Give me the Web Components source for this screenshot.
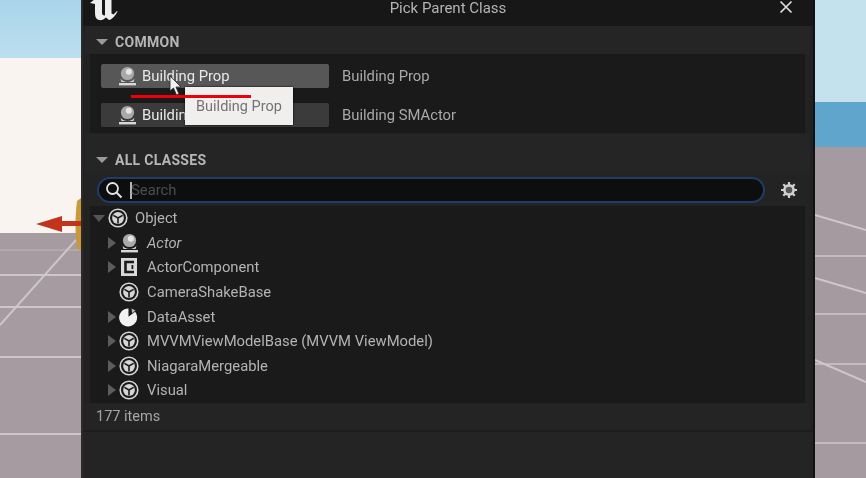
<!DOCTYPE html>
<html>
<head>
<meta charset="utf-8">
<title>Pick Parent Class</title>
<style>
	html, body { margin: 0; height: 100%; background: #a59aa0; overflow: hidden; }
	body { font-family: Roboto, "Liberation Sans", sans-serif; }
</style>
</head>
<body>
<ue-viewport>
	<ue-dialog heading="Pick Parent Class">
		<ue-section label="COMMON" height="28" pad="4">
			<ue-common-list>
				<ue-class-button label="Building Prop" desc="Building Prop"></ue-class-button>
				<ue-class-button label="Building SMActor" desc="Building SMActor"></ue-class-button>
				<ue-tooltip>Building Prop</ue-tooltip>
			</ue-common-list>
		</ue-section>
		<ue-section label="ALL CLASSES" height="38" pad="13">
			<ue-search></ue-search>
			<ue-tree>
				<ue-tree-row icon="object" open level="0">Object</ue-tree-row>
				<ue-tree-row icon="actor" arrow italic>Actor</ue-tree-row>
				<ue-tree-row icon="comp" arrow>ActorComponent</ue-tree-row>
				<ue-tree-row icon="object">CameraShakeBase</ue-tree-row>
				<ue-tree-row icon="pie" arrow>DataAsset</ue-tree-row>
				<ue-tree-row icon="object" arrow>MVVMViewModelBase (MVVM ViewModel)</ue-tree-row>
				<ue-tree-row icon="object" arrow>NiagaraMergeable</ue-tree-row>
				<ue-tree-row icon="object" arrow>Visual</ue-tree-row>
			</ue-tree>
			<ue-status>177 items</ue-status>
		</ue-section>
	</ue-dialog>
</ue-viewport>

<script>
const ICONS = {
	object: `<svg viewBox="0 0 20 20" width="20" height="20">
		<circle cx="10" cy="10" r="8.8" fill="none" stroke="#d6d6d6" stroke-width="1.6"/>
		<circle cx="10" cy="10" r="5.9" fill="#d6d6d6"/>
		<path d="M10 10 5.400 7.400M10 10l4.600-2.600M10 10v5.600" stroke="#1a1a1a" stroke-width="1.600" fill="none"/>
	</svg>`,
	actor: `<svg viewBox="0 0 20 20" width="20" height="20">
		<circle cx="10.500" cy="7.500" r="6.600" fill="#a9a9a9"/>
		<circle cx="11.800" cy="5.800" r="3" fill="#e6e6e6"/>
		<path d="M3.500 12.500c1.400 2.400 3.800 3.400 7 3.400s5.600-1 7-3.400l-1 3.600H4.500z" fill="#d8d8d8"/>
		<rect x="2" y="17" width="17" height="2.400" fill="#d8d8d8"/>
	</svg>`,
	comp: `<svg viewBox="0 0 20 20" width="20" height="20">
		<rect x="2" y="1" width="16" height="18" fill="#d9d9d9"/>
		<path d="M15 5H6.500v10H15" fill="none" stroke="#1a1a1a" stroke-width="2.600"/>
		<rect x="12.500" y="8" width="1.800" height="4" fill="#1a1a1a"/>
	</svg>`,
	pie: `<svg viewBox="0 0 20 20" width="20" height="20">
		<path d="M9.500 1.500v8.300l6.600-5A9 9 0 1 1 9.500 1.500z" fill="#f2f2f2"/>
		<path d="M12.500 1.500l4 2-3.400 2.700z" fill="#b8b8b8"/>
	</svg>`
}

class UeViewport extends HTMLElement {
	constructor() {
		super()
		this.attachShadow({ mode: 'open' })
		this.shadowRoot.innerHTML = `
			<style>
				:host { display: block; position: relative; width: 866px; height: 478px; overflow: hidden; filter: blur(.45px); }
				svg { position: absolute; left: 0; top: 0; }
				.content { position: relative; display: flex; justify-content: flex-start; padding-left: 81px; height: 100%; }
			</style>
			<svg width="866" height="478" viewBox="0 0 866 478">
				<defs>
					<linearGradient id="sky" x1="0" y1="0" x2="0" y2="1">
						<stop offset="0" stop-color="#a9d5ea"/>
						<stop offset="1" stop-color="#bcdfee"/>
					</linearGradient>
				</defs>
				<rect width="81" height="58" fill="url(#sky)"/>
				<rect y="58" width="81" height="175" fill="#faf4f1"/>
				<rect y="233" width="81" height="245" fill="#a69ba0"/>
				<rect x="815" width="51" height="102" fill="#c4e1ee"/>
				<rect x="815" y="102" width="51" height="45" fill="#5fa5cc"/>
				<rect x="815" y="147" width="51" height="331" fill="#a59aa0"/>
				<g stroke="#cfc6c9" stroke-width="2" fill="none">
					<path d="M0 275h81M0 307h81M0 357h81M0 434h81"/>
					<path d="M0 250h81" stroke="#b3a9ad"/>
					<path d="M0 325 76 240"/>
					<path d="M815 256h51M815 314h51M815 364h51M815 443h51" stroke-width="1.500"/>
					<path d="M815 278 866 293M815 360 866 382M815 215l51 15"/>
				</g>
				<path d="M77 248c-2-14-2-32 0-47l4-3v53z" fill="#c99a3c"/>
				<path d="M36 224 62 216v5h19v5H62v6z" fill="#c2331c"/>
			</svg>
			<div class="content"><slot></slot></div>
		`
	}
}

class UeDialog extends HTMLElement {
	constructor() {
		super()
		this.attachShadow({ mode: 'open' })
		this.shadowRoot.innerHTML = `
			<style>
				:host { display: flex; flex-direction: column; width: 734px; height: 478px; box-sizing: border-box; background: #222; border-left: 2px solid #2c2a2a; border-right: 2px solid #121212; color: #c4c4c4; }
				.title { flex: 0 0 26px; display: grid; grid-template-columns: 1fr auto 1fr; align-items: start; background: #171717; padding: 0 20px; }
				.title svg.logo { display: block; margin: -6px 0 0 -13px; }
				.name { font-size: 15px; line-height: 16px; color: #b4b4b4; }
				.close { justify-self: end; }
				.body { flex: 1; display: flex; flex-direction: column; padding: 0 3px 0 2px; min-height: 0; }
				.end { flex: 1; background: #242424; border-top: 2px solid #1c1c1c; margin: 0 -3px 0 -2px; }
			</style>
			<div class="title">
				<svg class="logo" width="28" height="27" viewBox="0 0 28 27">
					<path d="M0 9 5 5V1h7v18c0 1.500 1 2.500 2.500 2.500l.5-.3V1h6.500v18.500l2 1 3.500-3.500.5.500C26 21 22 25.500 19 26l-3-2.500C14 25.500 11.500 26.500 9 26 5.500 25 5 22 5 18V10z" fill="#eeeeee"/>
				</svg>
				<div class="name">${this.getAttribute('heading')}</div>
				<svg class="close" width="14" height="14" viewBox="0 0 14 14">
					<path d="M1.500 1.500l11 11M12.500 1.500l-11 11" stroke="#dedede" stroke-width="1.700" fill="none"/>
				</svg>
			</div>
			<div class="body">
				<slot></slot>
				<div class="end"></div>
			</div>
		`
	}
}

class UeSection extends HTMLElement {
	constructor() {
		super()
		this.attachShadow({ mode: 'open' })
		this.shadowRoot.innerHTML = `
			<style>
				:host { display: block; }
				.head { height: ${this.getAttribute('height')}px; padding-top: ${this.getAttribute('pad')}px; display: flex; align-items: center; gap: 7px; padding-left: 11px; background: #252525; font-size: 14px; font-weight: 700; letter-spacing: .3px; color: #b6b6b6; box-sizing: border-box; }
				.head i { width: 0; height: 0; border-left: 6px solid transparent; border-right: 6px solid transparent; border-top: 6px solid #9a9a9a; }
			</style>
			<div class="head"><i></i><span>${this.getAttribute('label')}</span></div>
			<slot></slot>
		`
	}
}

class UeCommonList extends HTMLElement {
	constructor() {
		super()
		this.attachShadow({ mode: 'open' })
		this.shadowRoot.innerHTML = `
			<style>
				:host { display: flex; flex-direction: column; gap: 15px; position: relative; background: #1a1a1a; padding: 10px 0 6px 11px; margin: 0 5px 1px 5px; height: 63px; }
				.line { position: absolute; left: 41px; top: 41px; width: 120px; height: 3px; background: #ee000a; z-index: 2; }
				svg { position: absolute; left: 79px; top: 21px; z-index: 2; }
			</style>
			<slot></slot>
			<svg width="14" height="24" viewBox="0 0 14 24">
				<path d="M1 1v15l3.500-3 3 7 2.500-1-3-7h5z" fill="#f2f2f2" stroke="#222" stroke-width=".8"/>
			</svg>
			<div class="line"></div>
		`
	}
}

class UeClassButton extends HTMLElement {
	constructor() {
		super()
		this.attachShadow({ mode: 'open' })
		const first = !this.previousElementSibling
		this.shadowRoot.innerHTML = `
			<style>
				:host { display: flex; align-items: center; gap: 13px; height: 24px; font-size: 14.8px; }
				.btn { width: 228px; height: 24px; box-sizing: border-box; padding-left: 16px; display: flex; align-items: center; gap: 5px; border-radius: 2px; background: ${first ? '#575757' : '#3b3b3b'}; color: #e9e9e9; white-space: nowrap; overflow: hidden; }
				.desc { color: #a9a9a9; }
				svg { flex: none; }
			</style>
			<div class="btn">${ICONS.actor}<span>${this.getAttribute('label')}</span></div>
			<span class="desc">${this.getAttribute('desc')}</span>
		`
	}
}

class UeTooltip extends HTMLElement {
	constructor() {
		super()
		this.attachShadow({ mode: 'open' })
		this.shadowRoot.innerHTML = `
			<style>
				:host { position: absolute; left: 95px; top: 33px; width: 108px; height: 38px; box-sizing: border-box; display: flex; align-items: center; justify-content: center; background: #f0efee; color: #737373; font-size: 14.500px; box-shadow: 0 0 2px #000; z-index: 1; }
			</style>
			<slot></slot>
		`
	}
}

class UeSearch extends HTMLElement {
	constructor() {
		super()
		this.attachShadow({ mode: 'open' })
		this.shadowRoot.innerHTML = `
			<style>
				:host { display: flex; align-items: center; gap: 14px; height: 34px; padding: 2px 11px 0 12px; background: #232323; box-sizing: border-box; }
				.box { flex: 1; height: 26px; box-sizing: border-box; border: 2px solid #1e3d6b; border-radius: 13px; background: #0e0e0e; display: flex; align-items: center; padding-left: 6px; color: #4d4d4d; font-size: 14.800px; }
				.caret { width: 2px; height: 17px; background: #b5b5b5; margin: 0 -1px 0 7px; }
				svg { flex: none; }
			</style>
			<div class="box">
				<svg width="18" height="18" viewBox="0 0 18 18">
					<circle cx="7.500" cy="7.500" r="5.500" fill="none" stroke="#e4e4e4" stroke-width="1.800"/>
					<path d="M11.500 11.500 16.500 16.500" stroke="#e4e4e4" stroke-width="2"/>
				</svg>
				<span class="caret"></span><span>Search</span>
			</div>
			<svg width="20" height="20" viewBox="0 0 20 20">
				<circle cx="10" cy="10" r="4.600" fill="#555" stroke="#cfcfcf" stroke-width="2.600"/>
				<path d="M10 2v3M10 15v3M2 10h3M15 10h3M4.300 4.300l2.100 2.100M13.600 13.600l2.100 2.100M15.700 4.300l-2.100 2.100M6.400 13.600l-2.100 2.100" stroke="#cfcfcf" stroke-width="2.200"/>
			</svg>
		`
	}
}

class UeTree extends HTMLElement {
	constructor() {
		super()
		this.attachShadow({ mode: 'open' })
		this.shadowRoot.innerHTML = `
			<style>
				:host { display: block; background: #1a1a1a; height: 197px; padding-left: 3px; margin: 0 5px; }
			</style>
			<slot></slot>
		`
	}
}

class UeTreeRow extends HTMLElement {
	constructor() {
		super()
		this.attachShadow({ mode: 'open' })
		const top = this.getAttribute('level') === '0'
		const arrow = top
			? '<i class="down"></i>'
			: (this.hasAttribute('arrow') ? '<i class="right"></i>' : '<i class="none"></i>')
		this.shadowRoot.innerHTML = `
			<style>
				:host { display: flex; align-items: center; height: 24.6px; font-size: 14.8px; color: #b3b3b3; padding-left: ${top ? 0 : 15}px; white-space: nowrap; }
				i { flex: none; display: block; width: 0; height: 0; }
				.down { border-left: 6px solid transparent; border-right: 6px solid transparent; border-top: 7px solid #555; margin-right: 3px; }
				.right { border-top: 6px solid transparent; border-bottom: 6px solid transparent; border-left: 8px solid #5c5c5c; margin-right: 3px; }
				.none { width: 8px; margin-right: 3px; }
				svg { flex: none; margin-right: ${top ? 7 : 8}px; }
				span { ${this.hasAttribute('italic') ? 'font-style: italic;' : ''} }
			</style>
			${arrow}${ICONS[this.getAttribute('icon')]}<span><slot></slot></span>
		`
	}
}

class UeStatus extends HTMLElement {
	constructor() {
		super()
		this.attachShadow({ mode: 'open' })
		this.shadowRoot.innerHTML = `
			<style>
				:host { display: flex; align-items: center; height: 27px; box-sizing: border-box; padding: 0 0 1px 11px; background: #242424; color: #a6a6a6; font-size: 14.500px; }
			</style>
			<slot></slot>
		`
	}
}

customElements.define('ue-viewport', UeViewport)
customElements.define('ue-dialog', UeDialog)
customElements.define('ue-section', UeSection)
customElements.define('ue-common-list', UeCommonList)
customElements.define('ue-class-button', UeClassButton)
customElements.define('ue-tooltip', UeTooltip)
customElements.define('ue-search', UeSearch)
customElements.define('ue-tree', UeTree)
customElements.define('ue-tree-row', UeTreeRow)
customElements.define('ue-status', UeStatus)
</script>
</body>
</html>
